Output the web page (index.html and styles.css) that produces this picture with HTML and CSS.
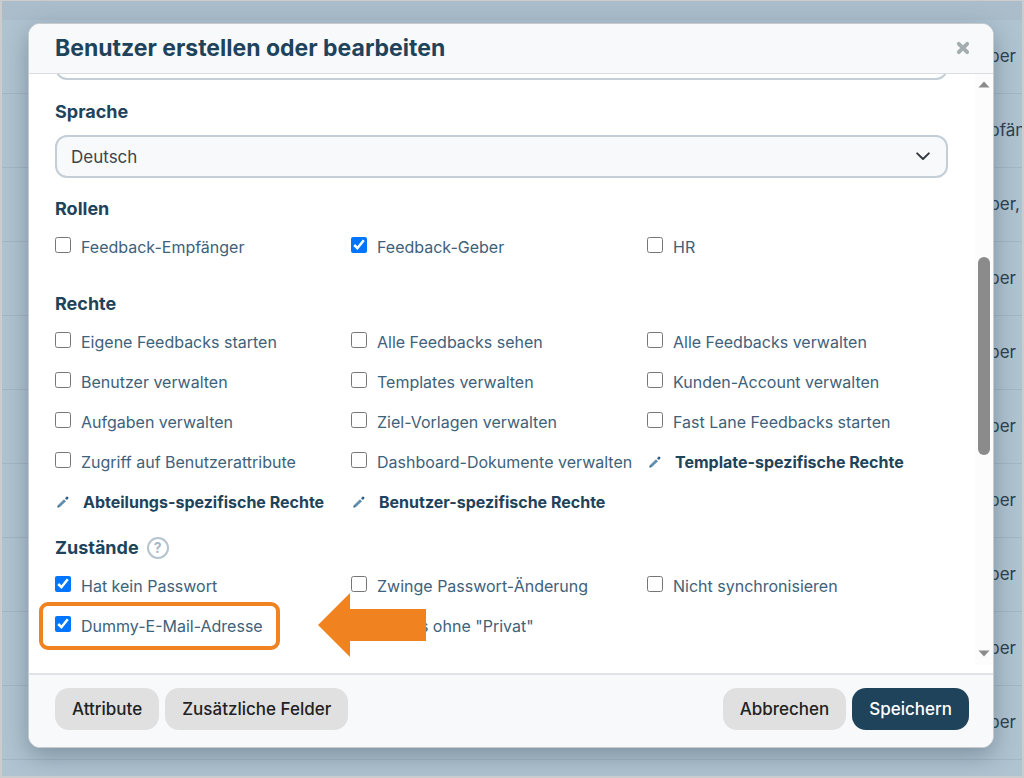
FILE: index.html
```html
<!DOCTYPE html>
<html lang="de">
<head>
<meta charset="utf-8">
<title>Benutzer erstellen oder bearbeiten</title>
<link rel="stylesheet" href="styles.css">
</head>
<body>
<div class="page">
  <div class="backdrop" aria-hidden="true">
    <div class="backdrop-head"></div>
    <div class="backdrop-row">Geber</div>
    <div class="backdrop-row wide">Empfänger</div>
    <div class="backdrop-row comma">Geber,</div>
    <div class="backdrop-row">Geber</div>
    <div class="backdrop-row">Geber</div>
    <div class="backdrop-row">Geber</div>
    <div class="backdrop-row">Geber</div>
    <div class="backdrop-row">Geber</div>
    <div class="backdrop-row">Geber</div>
    <div class="backdrop-row">Geber</div>
    <div class="backdrop-row"></div>
  </div>

  <div class="overlay">
    <form class="dialog" role="dialog" aria-labelledby="dialog-title">
      <header class="dialog-head">
        <h1 class="dialog-title" id="dialog-title">Benutzer erstellen oder bearbeiten</h1>
        <button class="close" type="button" aria-label="Schließen">
          <svg width="14" height="14" viewBox="0 0 14 14"><path d="M2.8 2.8 11.2 11.2M11.2 2.8 2.8 11.2" fill="none" stroke="#a3adb0" stroke-width="3.8" stroke-linecap="round"/></svg>
        </button>
      </header>

      <div class="dialog-body">
        <div class="fields">
          <input class="field-box previous" type="text" aria-label="Vorheriges Feld">

          <label class="heading" for="language">Sprache</label>
          <div class="select-wrap">
            <select class="field-box language" id="language"><option>Deutsch</option></select>
            <svg class="chevron" width="14" height="9" viewBox="0 0 14 9"><path d="M1.2 1.4 7 7 12.8 1.4" fill="none" stroke="#343a40" stroke-width="2" stroke-linecap="round" stroke-linejoin="round"/></svg>
          </div>

          <h2 class="heading roles">Rollen</h2>
          <div class="options">
            <label class="option"><input type="checkbox">Feedback-Empfänger</label>
            <label class="option"><input type="checkbox" checked>Feedback-Geber</label>
            <label class="option"><input type="checkbox">HR</label>
          </div>

          <h2 class="heading rights">Rechte</h2>
          <div class="options">
            <label class="option"><input type="checkbox">Eigene Feedbacks starten</label>
            <label class="option"><input type="checkbox">Alle Feedbacks sehen</label>
            <label class="option"><input type="checkbox">Alle Feedbacks verwalten</label>
            <label class="option"><input type="checkbox">Benutzer verwalten</label>
            <label class="option"><input type="checkbox">Templates verwalten</label>
            <label class="option"><input type="checkbox">Kunden-Account verwalten</label>
            <label class="option"><input type="checkbox">Aufgaben verwalten</label>
            <label class="option"><input type="checkbox">Ziel-Vorlagen verwalten</label>
            <label class="option"><input type="checkbox">Fast Lane Feedbacks starten</label>
            <label class="option"><input type="checkbox">Zugriff auf Benutzerattribute</label>
            <label class="option"><input type="checkbox">Dashboard-Dokumente verwalten</label>
            <a class="option specific" href="#"><svg class="pencil" width="16" height="14" viewBox="0 0 16 14"><path d="M2.4 12.6 3 9.9 9 4.2 11 6.2 5 12Z" fill="#6290b0"/><path d="M2.4 12.6 2.9 10.3 4.7 12.1Z" fill="#35658a"/><path d="M10 3.2 11.4 1.8Q12.2 1.3 13 2.1T13.2 3.8L11.9 5.1Z" fill="#2d5f85"/></svg>Template-spezifische Rechte</a>
            <a class="option specific" href="#"><svg class="pencil" width="16" height="14" viewBox="0 0 16 14"><path d="M2.4 12.6 3 9.9 9 4.2 11 6.2 5 12Z" fill="#6290b0"/><path d="M2.4 12.6 2.9 10.3 4.7 12.1Z" fill="#35658a"/><path d="M10 3.2 11.4 1.8Q12.2 1.3 13 2.1T13.2 3.8L11.9 5.1Z" fill="#2d5f85"/></svg>Abteilungs-spezifische Rechte</a>
            <a class="option specific" href="#"><svg class="pencil" width="16" height="14" viewBox="0 0 16 14"><path d="M2.4 12.6 3 9.9 9 4.2 11 6.2 5 12Z" fill="#6290b0"/><path d="M2.4 12.6 2.9 10.3 4.7 12.1Z" fill="#35658a"/><path d="M10 3.2 11.4 1.8Q12.2 1.3 13 2.1T13.2 3.8L11.9 5.1Z" fill="#2d5f85"/></svg>Benutzer-spezifische Rechte</a>
          </div>

          <h2 class="heading states">Zustände <button class="help" type="button" aria-label="Hilfe">?</button></h2>
          <div class="options">
            <label class="option"><input type="checkbox" checked>Hat kein Passwort</label>
            <label class="option"><input type="checkbox">Zwinge Passwort-Änderung</label>
            <label class="option"><input type="checkbox">Nicht synchronisieren</label>
            <div class="marked">
              <label class="option"><input type="checkbox" checked>Dummy-E-Mail-Adresse</label>
              <div class="marker"></div>
              <svg class="arrow" width="108" height="64" viewBox="0 0 108 64"><path d="M0 32 32 0V16H108V48H32V64Z" fill="#f08220"/></svg>
            </div>
            <label class="option"><input type="checkbox">Details ohne "Privat"</label>
          </div>
        </div>

        <div class="scrollbar" aria-hidden="true">
          <svg width="12" height="7" viewBox="0 0 12 7"><path d="M0.5 6.5 6 0.5 11.5 6.5Z" fill="#8b8b8b"/></svg>
          <div class="track"><div class="thumb"></div></div>
          <svg width="12" height="7" viewBox="0 0 12 7"><path d="M0.5 0.5 6 6.5 11.5 0.5Z" fill="#8b8b8b"/></svg>
        </div>
      </div>

      <footer class="dialog-foot">
        <button class="button" type="button">Attribute</button>
        <button class="button" type="button">Zusätzliche Felder</button>
        <button class="button cancel" type="button">Abbrechen</button>
        <button class="button primary" type="submit">Speichern</button>
      </footer>
    </form>
  </div>
</div>
</body>
</html>
```
FILE: styles.css
```css
* { box-sizing: border-box; }

body {
  margin: 0;
  font-family: Inter, "Open Sans", sans-serif;
  font-size: 16px;
  color: #1e435b;
}

.page {
  position: relative;
  display: grid;
  min-height: 100vh;
  background: #b0c3d1;
}

.page::after {
  content: "";
  position: absolute;
  inset: 0;
  border: 2px solid #cacccd;
  border-top-width: 1px;
  pointer-events: none;
}

.backdrop {
  position: absolute;
  inset: 0;
  overflow: hidden;
}

.backdrop-head {
  height: 20px;
  background: #abbdcb;
}

.backdrop-row {
  height: 74px;
  padding-right: 8px;
  border-bottom: 1px solid #a3b6c4;
  font-size: 17px;
  line-height: 72px;
  text-align: right;
  white-space: nowrap;
  color: #2b3f4e;
}

.backdrop-row.wide { margin-right: -36px; }
.backdrop-row.comma { padding-right: 4px; }

.overlay {
  position: relative;
  display: grid;
  padding: 23px 30px 30px 28px;
}

.dialog {
  display: flex;
  flex-direction: column;
  min-width: 0;
  border: 1px solid #c6cbcf;
  border-radius: 12px;
  background: #fff;
  box-shadow: 0 8px 24px rgba(50, 70, 85, 0.4);
  overflow: hidden;
}

.dialog-head {
  display: flex;
  align-items: center;
  justify-content: space-between;
  height: 50px;
  padding: 0 23px 2px 26px;
  border-bottom: 1px solid #d9dde1;
  background: #f8f9fb;
}

.dialog-title {
  margin: 0;
  font-size: 23px;
  font-weight: 700;
  line-height: 28px;
}

.close {
  display: flex;
  padding: 0;
  border: 0;
  background: none;
}

.dialog-body {
  display: flex;
  flex: 1;
  min-height: 0;
  overflow: hidden;
}

.fields {
  flex: 1;
  min-width: 0;
  padding: 0 27px 24px 26px;
}

.field-box {
  display: block;
  width: 100%;
  height: 43px;
  padding: 0 15px;
  border: 2px solid #c3ced6;
  border-radius: 12px;
  background: #f8f9fb;
  font: inherit;
  font-size: 17px;
  color: #404448;
}

.previous {
  margin-top: -37px;
  background: #fff;
}

.heading {
  display: flex;
  align-items: center;
  gap: 8px;
  margin: 0 0 6px;
  font-size: 18px;
  font-weight: 700;
  line-height: 24px;
}

label.heading { margin: 20px 0 11px; }
.roles { margin-top: 19px; }
.rights { margin-top: 25px; }
.states { margin-top: 14px; }

.select-wrap { position: relative; }

.language {
  padding: 0 14px;
  appearance: none;
}

.chevron {
  position: absolute;
  top: 17px;
  right: 18px;
  pointer-events: none;
}

.options {
  display: grid;
  grid-template-columns: repeat(3, minmax(0, 1fr));
  padding-right: 5px;
}

.option {
  display: flex;
  align-items: center;
  gap: 10px;
  height: 40px;
  font-size: 16px;
  white-space: nowrap;
  color: #40617a;
}

.option input {
  width: 16px;
  height: 16px;
  margin: 0 0 4px;
}

.specific {
  gap: 12px;
  font-weight: 700;
  color: #1e435b;
  text-decoration: none;
}

.help {
  width: 22px;
  height: 22px;
  padding: 0;
  border: 2px solid #b5c5cf;
  border-radius: 50%;
  background: none;
  font: inherit;
  font-size: 14px;
  line-height: 18px;
  color: #a5b8c4;
}

.marked { position: relative; }

.marker {
  position: absolute;
  top: -4px;
  left: -16px;
  width: 241px;
  height: 48px;
  border: 4px solid #f08220;
  border-radius: 9px;
}

.arrow {
  position: absolute;
  top: -13px;
  left: 263px;
  z-index: 1;
}

.scrollbar {
  display: flex;
  flex-direction: column;
  align-items: center;
  width: 18px;
  margin-bottom: 8px;
  padding: 7px 0 8px;
  background: #fcfcfc;
}

.track {
  flex: 1;
  width: 12px;
  padding-top: 169px;
}

.thumb {
  height: 198px;
  border-radius: 6px;
  background: #8b8b8b;
}

.dialog-foot {
  display: flex;
  align-items: center;
  gap: 6px;
  height: 74px;
  padding: 0 24px 4px 26px;
  border-top: 2px solid #dfe3e7;
  background: #f8f9fb;
}

.button {
  height: 42px;
  padding: 0 17px;
  border: 0;
  border-radius: 14px;
  background: #e0e0e0;
  font: inherit;
  font-size: 17px;
  font-weight: 500;
  color: #222;
}

.cancel { margin-left: auto; }

.primary {
  background: #1e435b;
  color: #fff;
}
```
